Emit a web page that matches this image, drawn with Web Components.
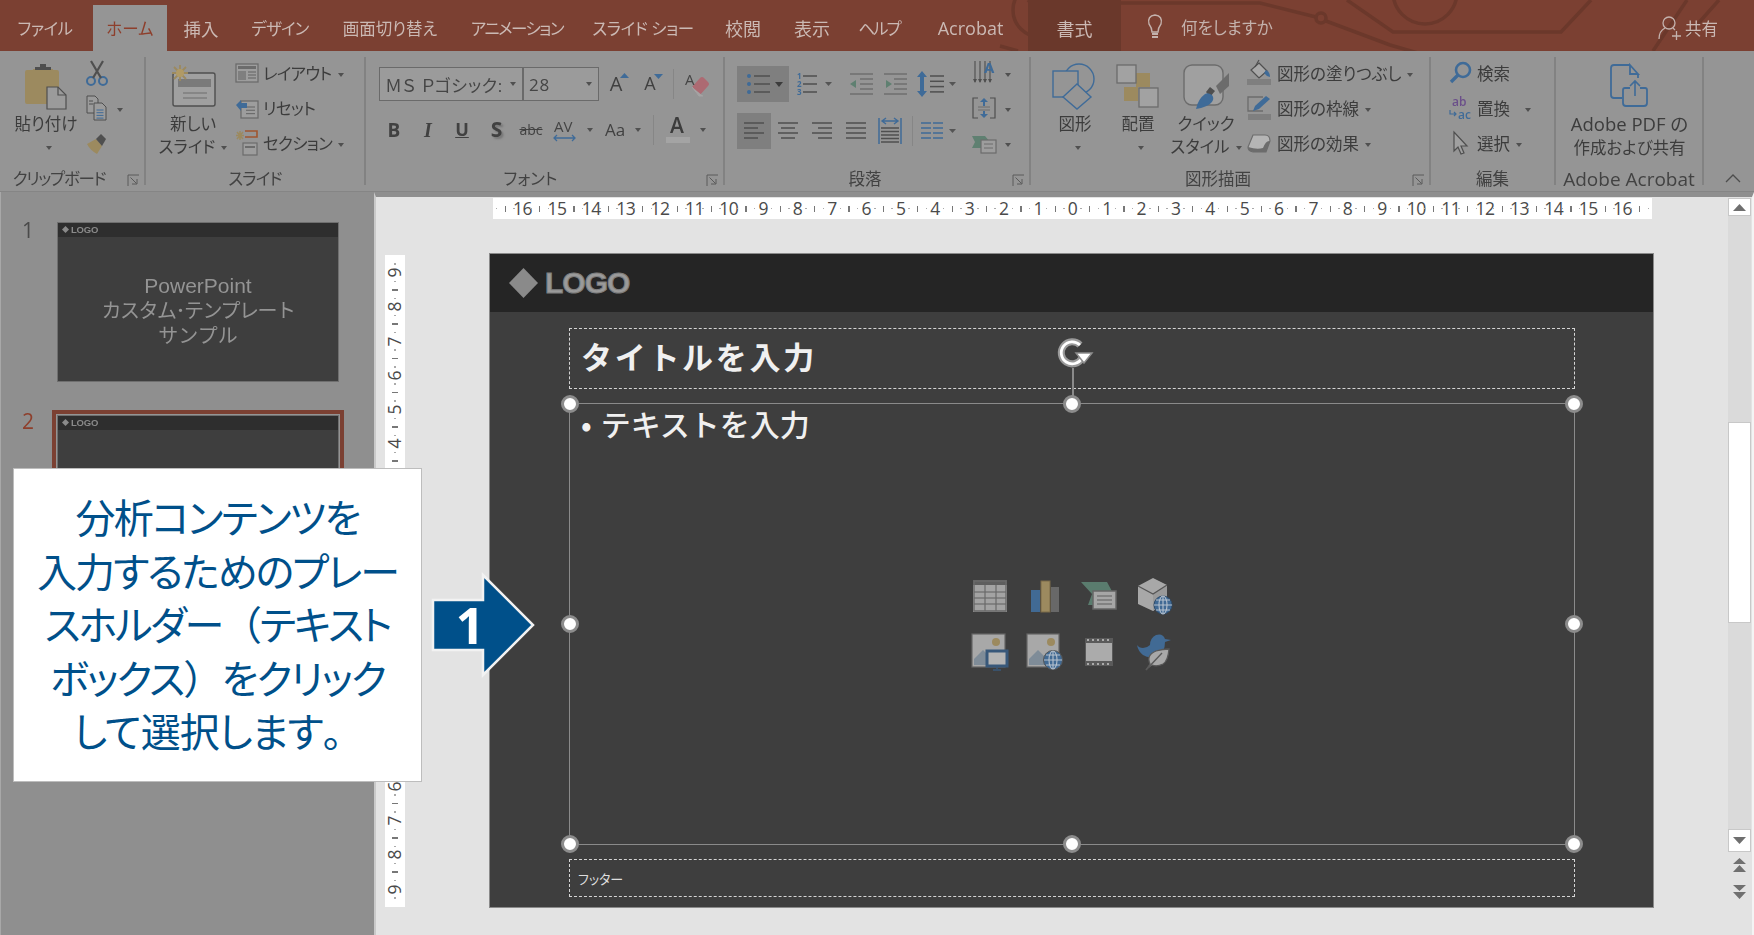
<!DOCTYPE html>
<html lang="ja"><head><meta charset="utf-8"><title>PowerPoint</title>
<style>
html,body{margin:0;padding:0;width:1754px;height:935px;overflow:hidden;background:#e3e3e3}
body{position:relative;font-family:"Open Sans","Noto Sans CJK JP",sans-serif;font-feature-settings:"palt";color:#3c3c3c;display:flex;flex-direction:column}
svg{overflow:visible}
</style></head><body>
<ppt-tabs></ppt-tabs>
<ppt-ribbon>
 <rb-group w="146" pad="26" ls="-1.3" launcher label="クリップボード">
  <rb-large icon="paste" style="margin-left:7px;width:78px">貼り付け<br><rb-caret></rb-caret></rb-large>
  <rb-col>
   <rb-small icon="scissors"></rb-small>
   <rb-small icon="copy"><rb-caret style="margin-left:2px"></rb-caret></rb-small>
   <rb-small icon="brush"></rb-small>
  </rb-col>
 </rb-group>
 <rb-group w="220" ls="-.8" label="スライド">
  <rb-large icon="newslide" style="margin-left:13px;width:68px">新しい<br>スライド<rb-caret></rb-caret></rb-large>
  <rb-col style="margin-left:8px;--g:4px;letter-spacing:-.7px">
   <rb-small icon="layout">レイアウト<rb-caret></rb-caret></rb-small>
   <rb-small icon="reset">リセット</rb-small>
   <rb-small icon="section">セクション<rb-caret></rb-caret></rb-small>
  </rb-col>
 </rb-group>
 <rb-group w="359" pad="28" launcher label="フォント">
  <rb-rows style="margin-left:11px">
   <rb-row style="height:34px;margin-top:10px">
    <rb-combo style="width:144px;margin-left:2px" text="ＭＳ Ｐゴシック:"></rb-combo>
    <rb-combo style="width:76px" text="28"></rb-combo>
    <rb-tool style="width:34px"><span style="font-size:20px;position:relative">A<svg width="9" height="5" style="position:absolute;left:10px;top:2px"><path d="M0 5L4.500 0L9 5Z" fill="#3f6b98"/></svg></span></rb-tool>
    <rb-tool style="width:34px"><span style="font-size:18px;position:relative">A<svg width="9" height="5" style="position:absolute;left:10px;top:2px"><path d="M0 0L4.500 5L9 0Z" fill="#3f6b98"/></svg></span></rb-tool>
    <rb-sep style="margin:0 6px"></rb-sep>
    <rb-tool icon="eraser" style="width:38px"></rb-tool>
   </rb-row>
   <rb-row style="height:32px;margin-top:13px">
    <rb-tool style="width:34px;font-weight:700;font-size:19px">B</rb-tool>
    <rb-tool style="width:34px;font-weight:700;font-style:italic;font-size:20px;font-family:'Liberation Serif',serif">I</rb-tool>
    <rb-tool style="width:34px;font-weight:700;font-size:18px;text-decoration:underline">U</rb-tool>
    <rb-tool style="width:35px;font-weight:700;font-size:21px;text-shadow:2px 2px 2px #777">S</rb-tool>
    <rb-tool style="width:34px;font-size:14px;text-decoration:line-through">abc</rb-tool>
    <rb-tool icon="av" style="width:34px"></rb-tool>
    <rb-tool style="width:16px"><rb-caret style="margin:0"></rb-caret></rb-tool>
    <rb-tool style="width:34px;font-size:17px">Aa</rb-tool>
    <rb-tool style="width:12px"><rb-caret style="margin:0"></rb-caret></rb-tool>
    <rb-sep style="margin:0 9px 0 9px"></rb-sep>
    <rb-tool icon="fontcolor" style="width:30px"></rb-tool>
    <rb-tool style="width:20px"><rb-caret style="margin:0"></rb-caret></rb-tool>
   </rb-row>
  </rb-rows>
 </rb-group>
 <rb-group w="306" pad="24" launcher label="段落">
  <rb-rows style="margin-left:12px;width:235px">
   <rb-row style="height:36px;margin-top:9px">
    <rb-tool selected icon="bullets" style="width:52px"></rb-tool>
    <rb-tool icon="numbers" style="width:46px;margin-left:3px"></rb-tool>
    <rb-tool icon="outdent" style="width:34px;margin-left:7px"></rb-tool>
    <rb-tool icon="indent" style="width:33px"></rb-tool>
    <rb-tool icon="linespace" style="width:46px;margin-left:4px"></rb-tool>
   </rb-row>
   <rb-row style="height:36px;margin-top:11px">
    <rb-tool selected icon="aleft" style="width:34px"></rb-tool>
    <rb-tool icon="acenter" style="width:34px"></rb-tool>
    <rb-tool icon="aright" style="width:34px"></rb-tool>
    <rb-tool icon="ajust" style="width:34px"></rb-tool>
    <rb-tool icon="adist" style="width:34px"></rb-tool>
    <rb-sep style="margin:0 4px 0 5px"></rb-sep>
    <rb-tool icon="columns" style="width:46px"></rb-tool>
   </rb-row>
  </rb-rows>
  <rb-col>
   <rb-small icon="textdir"><rb-caret style="margin-left:3px"></rb-caret></rb-small>
   <rb-small icon="textalign"><rb-caret style="margin-left:3px"></rb-caret></rb-small>
   <rb-small icon="smartart"><rb-caret style="margin-left:3px"></rb-caret></rb-small>
  </rb-col>
 </rb-group>
 <rb-group w="400" pad="24" launcher label="図形描画">
  <rb-large icon="shapes" style="margin-left:16px;width:56px">図形<br><rb-caret></rb-caret></rb-large>
  <rb-large icon="arrange" style="margin-left:6px;width:58px">配置<br><rb-caret></rb-caret></rb-large>
  <rb-large icon="quick" style="width:78px">クイック<br>スタイル<rb-caret></rb-caret></rb-large>
  <rb-col style="margin-left:2px">
   <rb-small icon="fill">図形の塗りつぶし<rb-caret></rb-caret></rb-small>
   <rb-small icon="outline">図形の枠線<rb-caret></rb-caret></rb-small>
   <rb-small icon="effect">図形の効果<rb-caret></rb-caret></rb-small>
  </rb-col>
 </rb-group>
 <rb-group w="125" label="編集">
  <rb-col style="margin-left:18px;--g:4px">
   <rb-small icon="find">検索</rb-small>
   <rb-small icon="replace">置換<rb-caret style="margin-left:15px"></rb-caret></rb-small>
   <rb-small icon="select">選択<rb-caret></rb-caret></rb-small>
  </rb-col>
 </rb-group>
 <rb-group w="148" fs="19" label="Adobe Acrobat">
  <rb-large icon="adobe" style="width:147px"><span style="font-size:18.500px">Adobe PDF の</span><br>作成および共有</rb-large>
 </rb-group>
 <rb-collapse></rb-collapse>
</ppt-ribbon>
<ppt-work>
 <ppt-sidebar slot="side">
  <ppt-thumb num="1" title-lines="PowerPoint|カスタム･テンプレート|サンプル"></ppt-thumb>
  <ppt-thumb num="2" selected style="margin-top:33px"></ppt-thumb>
 </ppt-sidebar>
 <ppt-ruler slot="hruler" dir="h" n="67"></ppt-ruler>
 <ppt-ruler slot="vruler" dir="v" n="37"></ppt-ruler>
 <ppt-slide slot="slide"></ppt-slide>
 <ppt-scroll slot="scroll"></ppt-scroll>
</ppt-work>
<ppt-callout><span style="letter-spacing:-1.900px">分析コンテンツを</span><br><span style="letter-spacing:-1.900px">入力するためのプレー</span><br><span style="letter-spacing:-2.200px">スホルダー<span style="font-feature-settings:normal">（</span>テキスト</span><br><span style="letter-spacing:-1.900px">ボックス<span style="font-feature-settings:normal">）</span>をクリック</span><br><span style="letter-spacing:-1px">して選択します<span style="font-feature-settings:normal">。</span></span></ppt-callout>
<step-arrow>1</step-arrow>
<script>
const B='#3f6b98',T='#9c8a5f',D='#4f4f4f',L='#a6a6a6',G='#6c6c6c',R='#ad6a72',GR='#5f8071';
const s=(w,h,c)=>`<svg xmlns="http://www.w3.org/2000/svg" width="${w}" height="${h}" viewBox="0 0 ${w} ${h}" fill="none" style="display:block;overflow:visible">${c}</svg>`;
const hl=(x,y,w,n,g,c,sw=1.4)=>{let o='';for(let i=0;i<n;i++)o+=`<path d="M${x} ${y+i*g}h${w}" stroke="${c}" stroke-width="${sw}"/>`;return o};
const ICONS={
 paste:s(44,46,`<path d="M3 7h6v-1h20v1h4q2 0 2 2v30q0 2-2 2H3q-2 0-2-2V9q0-2 2-2z" fill="${T}"/><path d="M11 7V4h5V1h6v3h5v3z" fill="${D}"/><path d="M23 24h11l8 8v14H23z" fill="#9b9b9b" stroke="${D}" stroke-width="1.2"/><path d="M34 24v8h8" stroke="${D}" stroke-width="1.2"/>`),
 scissors:s(24,26,`<circle cx="6" cy="21" r="4" stroke="${B}" stroke-width="2"/><circle cx="18" cy="21" r="4" stroke="${B}" stroke-width="2"/><path d="M8 18L18 1M16 18L6 1" stroke="${D}" stroke-width="2.2"/>`),
 copy:s(24,26,`<path d="M2 1h8l3 3v14H2z" fill="#9b9b9b" stroke="${D}"/><path d="M9 8h8l4 4v13H9z" fill="#9b9b9b" stroke="${D}"/>${hl(11.500,15,7,4,2.700,B,1)}${hl(4,6,4,2,3,D,1)}`),
 brush:s(24,24,`<path d="M2 13L11 8l6 7-5 8Q5 19 2 13z" fill="${T}"/><path d="M11 8l5-5 5 5-4 7z" fill="${D}"/>`),
 newslide:s(46,42,`<rect x="3" y="8" width="42" height="33" rx="2" stroke="${D}" stroke-width="1.400" fill="#a0a0a0"/><rect x="8" y="14" width="33" height="8" fill="#7a7a7a"/>${hl(13,28,24,2,5,G,1)}<g stroke="${T}" stroke-width="1.800"><path d="M10 0v16M2 8h16M4 2l12 12M16 2L4 14"/></g><circle cx="10" cy="8" r="4" fill="#b09a66"/>`),
 layout:s(24,20,`<rect x="1" y="1" width="22" height="18" fill="#9d9d9d" stroke="${G}" stroke-width="1.300"/><rect x="3" y="3" width="18" height="3" fill="${G}"/><rect x="3" y="8" width="8" height="9" fill="#7f7f7f"/>${hl(13,9,8,3,3,G,1.200)}`),
 reset:s(24,22,`<rect x="6" y="4" width="17" height="17" fill="#9d9d9d" stroke="${G}" stroke-width="1.300"/>${hl(11,10,9,3,3.300,G,1.200)}<path d="M1 8l5-5v3h6v5H6v3z" fill="${B}"/>`),
 section:s(24,26,`<rect x="8" y="13" width="14" height="12" fill="#9d9d9d" stroke="${G}" stroke-width="1.200"/><path d="M10 17h10" stroke="${G}" stroke-width="2"/><path d="M10 1h12v6H10" stroke="#a0552f" stroke-width="1.600"/><g stroke="${T}" stroke-width="1.500"><path d="M5 1v9M1 5.500h8M2 2l6 7M8 2L2 9"/></g>`),
 eraser:s(28,27,`<path d="M14 25l9-10q2-2 0-4l-4-4q-2-2-4 0l-8 9z" fill="${R}"/><path d="M7 16l7 9h4" fill="#a4a4a4" stroke="#a4a4a4"/><text x="0" y="14" font-size="15" fill="#444" font-family="Open Sans">A</text>`),
 av:s(28,26,`<text x="3" y="15" font-size="15" fill="#444" font-family="Open Sans">AV</text><path d="M3 21h21M6 18l-3 3 3 3M21 18l3 3-3 3" stroke="${B}" stroke-width="1.300"/>`),
 fontcolor:s(26,30,`<text x="5" y="18" font-size="21" fill="#3c3c3c" font-family="Open Sans" font-weight="600">A</text><rect x="1" y="22" width="24" height="6" fill="#a4a4a4"/>`),
 bullets:s(44,24,`<g fill="${B}"><circle cx="8" cy="4" r="2"/><circle cx="8" cy="12" r="2"/><circle cx="8" cy="20" r="2"/></g>${hl(13,4,16,3,8,D,1.500)}<path d="M34 10h8l-4 5z" fill="#3c3c3c"/>`),
 numbers:s(44,24,`<g fill="${B}" font-size="8" font-weight="700" font-family="Open Sans"><text x="4" y="7">1</text><text x="4" y="15">2</text><text x="4" y="23">3</text></g>${hl(10,4,14,3,8,D,1.500)}<path d="M32 10h7l-3.500 4z" fill="#555"/>`),
 outdent:s(26,24,`${hl(1,2,23,1,0,G,1.400)}${hl(11,7,13,3,5,G,1.400)}${hl(1,22,23,1,0,G,1.400)}<path d="M1 12l6-4v8z" fill="${GR}"/>`),
 indent:s(26,24,`${hl(1,2,23,1,0,G,1.400)}${hl(11,7,13,3,5,G,1.400)}${hl(1,22,23,1,0,G,1.400)}<path d="M9 12L3 8v8z" fill="${GR}"/>`),
 linespace:s(44,28,`<path d="M5 1l5 6H7v14h3l-5 6-5-6h3V7H0z" fill="${B}"/>${hl(13,6,14,4,5.300,D,1.500)}<path d="M32 12h7l-3.500 4z" fill="#555"/>`),
 aleft:s(24,22,hl(2,3,20,1,0,D,1.500)+hl(2,8,14,1,0,D,1.500)+hl(2,13,20,1,0,D,1.500)+hl(2,18,14,1,0,D,1.500)),
 acenter:s(24,22,hl(2,3,20,1,0,D,1.500)+hl(5,8,14,1,0,D,1.500)+hl(2,13,20,1,0,D,1.500)+hl(5,18,14,1,0,D,1.500)),
 aright:s(24,22,hl(2,3,20,1,0,D,1.500)+hl(8,8,14,1,0,D,1.500)+hl(2,13,20,1,0,D,1.500)+hl(8,18,14,1,0,D,1.500)),
 ajust:s(24,22,hl(2,3,20,4,5,D,1.500)),
 adist:s(24,30,`<path d="M1 2v26M23 2v26" stroke="${B}" stroke-width="1.500"/><path d="M5 5h14M8 2L4 5l4 3M16 2l4 3-4 3" stroke="${B}" stroke-width="1.400"/>${hl(3,12,18,5,3.500,D,1.500)}`),
 columns:s(42,22,`${hl(2,3,10,4,5,B,1.500)}${hl(14,3,10,4,5,B,1.500)}<path d="M30 9h7l-3.500 4z" fill="#555"/>`),
 textdir:s(24,26,`<path d="M3 1v21M8 1v21M13 1v21M18 1v21" stroke="${D}" stroke-width="1.100"/><path d="M1 19h4l-2 4zM6 19h4l-2 4zM11 19h4l-2 4zM16 19h4l-2 4z" fill="${D}"/><text x="12" y="13" font-size="15" font-weight="700" fill="${B}" font-family="Open Sans">A</text>`),
 textalign:s(24,24,`<path d="M6 2H1v20h5M18 2h5v20h-5" stroke="${D}" stroke-width="1.200"/>${hl(6,11,12,2,3,G,1)}<path d="M12 2l4 4h-3v4h-2V6H8zM12 22l-4-4h3v-3h2v3h3z" fill="${B}"/>`),
 smartart:s(24,22,`<path d="M0 4h13l5 6-5 6H0l3-6z" fill="${GR}"/><rect x="9" y="8" width="15" height="13" fill="#9d9d9d" stroke="${G}" stroke-width="1.200"/>${hl(12,12,9,2,4,G,1)}`),
 shapes:s(46,46,`<circle cx="27" cy="16" r="15" stroke="${B}" stroke-width="1.400"/><rect x="1" y="8" width="25" height="26" fill="#959595" stroke="${B}" stroke-width="1.400"/><path d="M25 21l14 13-14 12-14-12z" fill="#959595" stroke="${B}" stroke-width="1.400"/>`),
 arrange:s(44,44,`<rect x="20" y="9" width="14" height="14" fill="${T}"/><rect x="8" y="23" width="14" height="14" fill="${T}"/><rect x="1" y="1" width="19" height="18" fill="#a2a2a2" stroke="${G}" stroke-width="1.300"/><rect x="23" y="24" width="19" height="19" fill="#a2a2a2" stroke="${G}" stroke-width="1.300"/>`),
 quick:s(46,46,`<rect x="1" y="2" width="39" height="40" rx="8" fill="#a0a0a0" stroke="${G}" stroke-width="1.400"/><path d="M23 29l4-5 5 4-5 6z" fill="${D}"/><path d="M33 23l13-13v13l-9 8z" fill="${G}"/><path d="M13 46q2-10 9-15 3-2 7 1 3 4-1 8-4 4-15 6z" fill="${B}"/>`),
 fill:s(26,26,`<rect x="1" y="19" width="24" height="6" fill="#7f7f7f"/><path d="M13 3l8 8-8 7-8-8z" fill="#a8a8a8" stroke="${D}" stroke-width="1.200"/><path d="M9 7L13 0" stroke="${D}" stroke-width="1.200"/><path d="M20 10q4 2 4 7-4-1-6-4z" fill="${B}"/>`),
 outline:s(24,26,`<rect x="1" y="19" width="23" height="6" fill="#7f7f7f"/><path d="M16 2H1v14h15" stroke="${G}" stroke-width="1.300"/><path d="M6 16l2-5L19 1l4 3L12 14z" fill="${B}"/>`),
 effect:s(24,22,`<path d="M6 3h12q5 0 5 6l-4 11H6q-5-1-5-5z" fill="#b5b5b5" stroke="${G}" stroke-width="1.200"/><path d="M1 15q9 3 15 1 3-8 7-7l-4 11H6q-5-1-5-5z" fill="${G}"/>`),
 find:s(24,24,`<circle cx="14" cy="9" r="7" stroke="${B}" stroke-width="2.600"/><path d="M9 14l-7 7" stroke="${B}" stroke-width="3.400"/>`),
 replace:s(24,26,`<text x="3" y="11" font-size="12" fill="#6b4f8a" font-family="Open Sans" font-weight="600">ab</text><text x="9" y="24" font-size="12" fill="${B}" font-family="Open Sans" font-weight="600">ac</text><path d="M1 15v4h6M5 17l2 2-2 2" stroke="${B}" stroke-width="1.200"/>`),
 select:s(24,24,`<path d="M5 1v19l4-4 3 7 3-1-3-7h6z" fill="#a0a0a0" stroke="${D}" stroke-width="1.200"/>`),
 adobe:s(40,44,`<path d="M20 1H4Q1 1 1 4v27q0 3 3 3h8M20 1l8 9h-8zM28 10v4" stroke="${B}" stroke-width="1.800"/><path d="M20 24h-5q-2 0-2 2v13q0 3 3 3h18q3 0 3-3V26q0-2-2-2h-5" stroke="${B}" stroke-width="1.800"/><path d="M25 32V17M20 22l5-5 5 5" stroke="${B}" stroke-width="1.600"/>`)
};
const PH={
 table:s(34,32,`<rect width="34" height="32" fill="#a3a3a3"/><rect width="34" height="5" fill="#5e5e5e"/><path d="M1 1v30h32V1z" stroke="#6a6a6a" stroke-width="1.400"/>${hl(1,12,32,3,6,'#6a6a6a',1.200)}<path d="M12 5v26M23 5v26" stroke="#6a6a6a" stroke-width="1.200"/>`),
 chart:s(28,32,`<rect x="0" y="10" width="9" height="22" fill="#416a94"/><rect x="10" y="1" width="9" height="31" fill="#9c8a5f" stroke="#7a6a48"/><rect x="20" y="7" width="8" height="25" fill="#686868"/>`),
 art:s(36,30,`<path d="M0 1h26l7 13-11 10H7l4-11z" fill="#5a7c6e"/><rect x="12" y="10" width="23" height="18" fill="#a6a6a6" stroke="#666" stroke-width="1.500"/>${hl(16,15,15,3,4,'#6a6a6a',1.200)}`),
 cube:s(36,38,`<path d="M17 1l14 7v16l-14 10-15-7V9z" fill="#a8a8a8"/><path d="M17 17l14-9v16l-14 10z" fill="#9a9a9a"/><path d="M2 9l15 8 14-9" stroke="#555" stroke-width="1.300"/><circle cx="27" cy="28" r="9" fill="#416a94" stroke="#2f4c6b"/><path d="M18 28h18M27 19v18M20 23h14M20 33h14" stroke="#b7c2ce" stroke-width="1.100"/><ellipse cx="27" cy="28" rx="4" ry="9" stroke="#b7c2ce" stroke-width="1.100"/>`),
 pic:s(38,36,`<rect x="1" y="0" width="33" height="33" fill="#a8a8a8" stroke="#666" stroke-width="1.200"/><circle cx="25" cy="8" r="4" fill="#9c8a5f"/><path d="M3 31V25l9-9 9 9 3 6z" fill="#7f8c98"/><rect x="16" y="17" width="20" height="15" fill="#b5b5b5" stroke="#38587a" stroke-width="3"/><path d="M26 33v2M22 36h8" stroke="#38587a" stroke-width="1.500"/>`),
 online:s(37,36,`<rect x="1" y="0" width="32" height="33" fill="#a8a8a8" stroke="#666" stroke-width="1.200"/><circle cx="25" cy="8" r="4" fill="#9c8a5f"/><path d="M3 31V25l9-9 9 9 3 6z" fill="#7f8c98"/><circle cx="27" cy="26" r="9.500" fill="#416a94" stroke="#555"/><path d="M18 26h18M27 17v18M20 21h14M20 31h14" stroke="#b7c2ce" stroke-width="1.100"/><ellipse cx="27" cy="26" rx="4" ry="9" stroke="#b7c2ce" stroke-width="1.100"/>`),
 video:s(28,28,`<rect width="28" height="28" fill="#5a5a5a"/><rect x="1" y="5" width="26" height="18" fill="#ababab"/><g fill="#ababab"><rect x="2" y="1" width="2" height="2"/><rect x="7" y="1" width="2" height="2"/><rect x="12" y="1" width="2" height="2"/><rect x="17" y="1" width="2" height="2"/><rect x="22" y="1" width="2" height="2"/><rect x="2" y="25" width="2" height="2"/><rect x="7" y="25" width="2" height="2"/><rect x="12" y="25" width="2" height="2"/><rect x="17" y="25" width="2" height="2"/><rect x="22" y="25" width="2" height="2"/></g>`),
 bird:s(34,38,`<path d="M0 12q2 3 6 3 4 0 7-3 0-7 6-10 7-2 9 4l6 1-6 2q0 10-7 14-9 3-15-1Q1 18 0 12z" fill="#416a94"/><path d="M9 37l4-6q-4-9 6-13 7-2 13-2-1 12-6 15-6 3-11 1" fill="#a8a8a8" stroke="#585858" stroke-width="1.300"/><path d="M9 37L25 20" stroke="#585858" stroke-width="1.300"/>`)
};
function el(name,html,extra){customElements.define(name,class extends HTMLElement{
 connectedCallback(){if(this.shadowRoot)return;const r=this.attachShadow({mode:'open'});r.innerHTML=typeof html==='function'?html(this):html;if(extra)extra(this,r)}
})}
const TABS=[['ファイル',93,'padding-right:3px;box-sizing:border-box;letter-spacing:-.5px'],['ホーム',74,'',1],['挿入',68,'font-size:17.500px'],['デザイン',90,'letter-spacing:-.8px'],['画面切り替え',130],['アニメーション',124,'letter-spacing:-1.500px'],['スライド ショー',128,'letter-spacing:-.4px'],['校閲',72,'font-size:18px'],['表示',66,'font-size:18px'],['ヘルプ',68,'letter-spacing:-2px'],['Acrobat',115,'font-size:18px'],['書式',93,'font-size:18px',2]];
el('ppt-tabs',()=>`<style>
:host{display:flex;height:51px;background:#7b4032;position:relative;color:#cbb9b4;font-size:16.500px;flex:none;overflow:hidden;filter:blur(.3px)}
svg.c{position:absolute;left:0;top:0}
.t{position:relative;display:flex;align-items:center;justify-content:center;height:46px;margin-top:5px;white-space:nowrap}
.a{background:#959595;color:#8e3f2c}
.f{background:#6a382b;margin-top:0;height:51px;padding-top:5px;box-sizing:border-box}
.tell{position:relative;display:flex;align-items:center;gap:16px;margin-left:24px;padding-top:3px;color:#c4b2ad}
.share{position:relative;margin-left:auto;margin-right:36px;display:flex;align-items:center;gap:3px;padding-top:5px}
</style>
<svg class="c" width="1754" height="51" fill="none" stroke="#6b382b" stroke-width="3.500">
<circle cx="1040" cy="10" r="27"/><path d="M1028 0l26 26M1030 14V0h14"/>
<path d="M1114 3h146l56 14M1326 21l64 24 28 8"/><circle cx="1321" cy="18" r="5"/><circle cx="1113" cy="3" r="4"/>
<path d="M1347 0l46 32h168l30-32"/><circle cx="1425" cy="-8" r="32"/>
<path d="M1687 0l-34 51M1719 0l-32 36"/>
<path d="M1000 46l18 5"/></svg>
${TABS.map(([l,w,st,k])=>`<div class="t ${k==1?'a':k==2?'f':''}" style="width:${w}px;${st||''}">${l}</div>`).join('')}
<div class="tell"><svg width="20" height="26" fill="none" stroke="#c4b2ad" stroke-width="1.400"><path d="M7 18q0-4-3-8-2-8 6-9 8 1 6 9-3 4-3 8z"/><path d="M7 20h6M7 23h6" stroke-width="1.800"/></svg><span>何をしますか</span></div>
<div class="share"><svg width="24" height="26" fill="none" stroke="#c4b2ad" stroke-width="1.300"><circle cx="11" cy="8" r="6"/><path d="M1 24q0-8 6-11M15 13l2 2M14 21h9M18.500 16v9"/></svg><span>共有</span></div>`);
el('ppt-ribbon',`<style>:host{display:flex;position:relative;box-sizing:border-box;height:141px;padding-top:6px;background:#959595;border-bottom:1px solid #858585;flex:none;filter:blur(.3px)}</style><slot></slot>`);
el('rb-group',t=>`<style>
:host{display:flex;flex-direction:column;box-sizing:border-box;height:128px;border-right:2px solid #828282;position:relative;flex:none;width:${t.getAttribute('w')}px}
.b{display:flex;flex:1;align-items:flex-start;min-height:0}
.l{text-align:center;font-size:${t.getAttribute('fs')||16.5}px;letter-spacing:${t.getAttribute('ls')||0}px;line-height:16px;height:14px;padding-right:${t.getAttribute('pad')||0}px;white-space:nowrap;color:#424242}
svg{position:absolute;right:5px;bottom:-1px}
</style><div class="b"><slot></slot></div><div class="l">${t.getAttribute('label')}</div>
${t.hasAttribute('launcher')?`<svg width="12" height="12" fill="none" stroke="#5a5a5a"><path d="M1 12V1h11"/><path d="M3.500 3.500l6 6M10 5v5H5"/></svg>`:''}`);
el('rb-large',t=>`<style>:host{display:flex;flex-direction:column;align-items:center;flex:none;padding-top:3px;font-size:16.500px;line-height:23px;text-align:center;white-space:nowrap}
.i{height:51.500px;display:flex;align-items:center;justify-content:center}</style><div class="i">${ICONS[t.getAttribute('icon')]||''}</div><div><slot></slot></div>`);
el('rb-col',`<style>:host{display:flex;flex-direction:column;flex:none;margin-top:-2px}</style><slot></slot>`);
el('rb-rows',`<style>:host{display:flex;flex-direction:column;flex:none}</style><slot></slot>`);
el('rb-row',`<style>:host{display:flex;align-items:center;flex:none}</style><slot></slot>`);
el('rb-small',t=>`<style>:host{display:flex;align-items:center;height:35px;font-size:16.500px;white-space:nowrap;flex:none}
.i{width:24px;display:flex;justify-content:center;flex:none}.t{margin-left:var(--g,6px)}</style><div class="i">${ICONS[t.getAttribute('icon')]||''}</div><div class="t"><slot></slot></div>`);
el('rb-tool',t=>`<style>:host{display:flex;align-items:center;justify-content:center;height:100%;flex:none;white-space:nowrap;color:#414141;line-height:1.3}
:host([selected]){background:#7f7f7f}</style>${ICONS[t.getAttribute('icon')]||''}<slot></slot>`);
el('rb-caret',`<style>:host{display:inline-block;width:0;height:0;border:3.500px solid transparent;border-top:4px solid #505050;border-bottom:0;margin-left:6px;vertical-align:middle}</style>`);
el('rb-sep',`<style>:host{display:block;width:1px;height:30px;background:#868686;flex:none}</style>`);
el('rb-combo',t=>`<style>:host{display:flex;align-items:center;box-sizing:border-box;height:34px;border:1px solid #6a6a6a;background:#9b9b9b;padding:0 6px 0 5px;font-size:17px;letter-spacing:.7px;color:#454545;flex:none;white-space:nowrap}
span{flex:1}</style><span>${t.getAttribute('text')}</span><rb-caret></rb-caret>`);
el('rb-collapse',`<style>:host{display:flex;margin-left:20px;align-items:flex-end;height:128px}</style><svg width="18" height="10" fill="none" stroke="#4d4d4d" stroke-width="1.300" style="margin-bottom:2px"><path d="M2 9l7-7 7 7"/></svg>`);
el('ppt-work',`<style>:host{display:flex;flex:1;min-height:0}
.m{flex:1;display:flex;background:#e3e3e3;border-top:5px solid #8f8f8f;border-left:2px solid #c9c9c9;border-right:2px solid #f4f4f4}
.w{flex:1;padding-top:1px}.h{display:block;margin-left:117px}
.r{display:flex;margin-top:35px;margin-left:9px;align-items:flex-start}
.sl{margin-left:85px}</style>
<slot name="side"></slot>
<div class="m"><div class="w"><div class="h"><slot name="hruler"></slot></div>
<div class="r"><slot name="vruler"></slot><div class="sl"><slot name="slide"></slot></div></div></div>
<slot name="scroll"></slot></div>`);
el('ppt-sidebar',`<style>:host{display:block;box-sizing:border-box;width:374px;background:#8f8f8f;padding:30px 0 0 57px;border-left:1px solid #a8a8a8;margin-left:0;flex:none;filter:blur(.3px)}</style><slot></slot>`);
el('ppt-thumb',t=>{const n=t.getAttribute('num'),sel=t.hasAttribute('selected'),ls=t.getAttribute('title-lines');return `<style>
:host{display:block;position:relative;width:282px;height:160px;margin-left:-1px;background:#3e3e3e;box-sizing:border-box;outline:1px solid #6f6f6f;outline-offset:-1px;${sel?'box-shadow:0 0 0 1px #949494,0 0 0 5px #7b4032;':''}}
.n{position:absolute;left:-35px;top:${sel?-5:-3}px;font-size:21px;line-height:22px;color:${sel?'#8e3f2c':'#4a4a4a'};font-family:"Open Sans"}
.h{display:flex;align-items:center;gap:2px;height:15px;background:#2e2e2e;padding-left:5px;font:700 9.500px "Liberation Sans";color:#8a8a8a;letter-spacing:-.2px}
.d{width:7px;height:7px;background:#8a8a8a;clip-path:polygon(50% 0,100% 50%,50% 100%,0 50%)}
.b{text-align:center;color:#949494;font:20px/25.500px "Liberation Sans","Noto Sans CJK JP",sans-serif;padding-top:36px}
.b span{display:block;white-space:nowrap}
.b span:nth-child(1){font-size:21px}.b span:nth-child(2){letter-spacing:-1.500px}</style>
<div class="n">${n}</div><div class="h"><span class="d"></span>LOGO</div>
<div class="b">${ls?ls.split('|').map(x=>`<span>${x}</span>`).join(''):''}</div>`});
el('ppt-ruler',t=>{const n=+t.getAttribute('n'),v=t.getAttribute('dir')==='v';let m='';for(let i=-n;i<=n;i++){const k=((i%4)+4)%4;m+=k===0?`<i><b>${Math.abs(i/4)}</b></i>`:k===2?`<i><u></u></i>`:`<i><s></s></i>`}
return `<style>:host{display:flex;flex:none;justify-content:center;align-items:center;background:#fff;color:#4a4a4a;font:17.500px/1 "Open Sans",sans-serif;letter-spacing:-.5px;${v?'flex-direction:column;width:20px;height:652px;margin-top:1px':'width:1159px;height:21px'}}
i{display:flex;align-items:center;justify-content:center;flex:none;font-style:normal;${v?'height:8.575px;width:100%':'width:8.600px;height:100%'}}
b{font-weight:400;white-space:nowrap;${v?'transform:rotate(-90deg)':''}}
u{display:block;background:#777;${v?'width:6px;height:1.300px':'width:1.300px;height:6px'}}
s{display:block;width:1.500px;height:1.500px;background:#aaa}</style>${m}`});
el('ppt-slide',()=>`<style>
:host{display:block;box-sizing:border-box;width:1163px;height:653px;background:#3e3e3e;outline:1px solid #8a8a8a;font-family:"Noto Sans CJK JP",sans-serif;color:#f0f0f0;font-feature-settings:normal}
.hd{display:flex;align-items:center;height:58px;background:#252525;padding-left:19px;gap:7px}
.dm{width:29px;height:30px;background:#8a8a8a;clip-path:polygon(50% 0,100% 50%,50% 100%,0 50%)}
.lg{font:700 30px "Liberation Sans",sans-serif;letter-spacing:-1px;color:#9a9a9a;-webkit-text-stroke:1px #7f7f7f}
.bd{padding:16px 78px 0 79px}
.ti{height:61px;box-sizing:border-box;border:1px dashed #d5d5d5;padding:0 0 6px 11px;display:flex;align-items:center;font-size:31px;font-weight:700;letter-spacing:2.700px}
.tx{position:relative;margin-top:14px;height:442px;box-sizing:border-box;border:1.500px solid #8a8a8a;padding:0 0 0 11px;font-size:30px;line-height:39px;font-weight:500;display:block}
.ft{margin-top:14px;height:38px;box-sizing:border-box;border:1px dashed #d5d5d5;display:flex;align-items:center;padding-left:8px;font-size:13px;color:#ddd;font-feature-settings:"palt"}
.gd{position:absolute;left:50%;top:50%;transform:translate(-50%,-50%);display:grid;grid-template-columns:repeat(4,54.500px);grid-template-rows:repeat(2,56px);place-items:center}
.h1{position:absolute;width:12px;height:12px;border-radius:50%;background:#fff;border:3px solid #8c8c8c;margin:-9px 0 0 -9px}
.st{position:absolute;left:50%;top:-36px;width:2px;height:36px;background:#8a8a8a}
.ro{position:absolute;left:50%;top:-68px;margin-left:-20px}
.bu{margin-right:9px;font-size:30px}
</style>
<div class="hd"><span class="dm"></span><span class="lg">LOGO</span></div>
<div class="bd">
<div class="ti">タイトルを入力</div>
<div class="tx"><span class="bu">•</span>テキストを入力
<div class="gd">${PH.table}${PH.chart}${PH.art}${PH.cube}${PH.pic}${PH.online}${PH.video}${PH.bird}</div>
<div class="st"></div>
<svg class="ro" width="42" height="36" fill="none"><path d="M28 9a11 11 0 1 0 2 13" stroke="#9a9a9a" stroke-width="7"/><path d="M28 9a11 11 0 1 0 2 13" stroke="#fff" stroke-width="2.800"/><path d="M24 17h16l-8 10z" fill="#fff" stroke="#8c8c8c" stroke-width="1.500"/></svg>
${[[0,0],[50,0],[100,0],[0,50],[100,50],[0,100],[50,100],[100,100]].map(([x,y])=>`<span class="h1" style="left:${x}%;top:${y}%"></span>`).join('')}
</div>
<div class="ft">フッター</div>
</div>`);
el('ppt-scroll',`<style>
:host{display:flex;flex-direction:column;align-items:center;width:23px;margin:1px 1px 0 0;flex:none}
.btn{width:23px;box-sizing:border-box;background:#fff;border:1px solid #c8c8c8;display:flex;align-items:center;justify-content:center;flex:none}
.u{height:18px}.d{height:23px}
.tr{flex:none;width:23px;height:613px;background:#dadada;padding-top:206px;box-sizing:border-box}
.th{height:201px;background:#fff;border:1px solid #c8c8c8;box-sizing:border-box}
</style>
<div class="btn u"><svg width="13" height="7"><path d="M0 7L6.500 0L13 7Z" fill="#6f6f6f"/></svg></div>
<div class="tr"><div class="th"></div></div>
<div class="btn d"><svg width="13" height="7"><path d="M0 0L6.500 7L13 0Z" fill="#6f6f6f"/></svg></div>
<svg width="13" height="14" style="margin-top:6px"><path d="M0 6L6.500 0L13 6ZM0 14L6.500 7L13 14Z" fill="#707070"/></svg>
<svg width="13" height="14" style="margin-top:13px"><path d="M0 0L6.500 6L13 0ZM0 7L6.500 14L13 7Z" fill="#707070"/></svg>`);
el('ppt-callout',`<style>:host{position:absolute;left:13px;top:468px;width:409px;height:314px;box-sizing:border-box;background:#fff;border:1.500px solid #bdbdbd;color:#00508a;text-align:center;font-size:40px;font-weight:400;line-height:53.500px;padding-top:21px;white-space:nowrap;font-family:"Noto Sans CJK JP",sans-serif}</style><slot></slot>`);
el('step-arrow',`<style>:host{position:absolute;left:430px;top:572px;width:106px;height:106px;display:block}
svg{position:absolute;inset:0}
span{position:absolute;left:24px;top:0;width:32px;height:106px;display:flex;align-items:center;justify-content:center;color:#fff;font:700 50px "Noto Sans",sans-serif}</style>
<svg width="106" height="106"><path d="M3 28H53V3L103 53L53 103V78H3Z" fill="#00508a" stroke="#f2f2f2" stroke-width="2.500"/></svg><span><slot></slot></span>`);
</script>
</body></html>
